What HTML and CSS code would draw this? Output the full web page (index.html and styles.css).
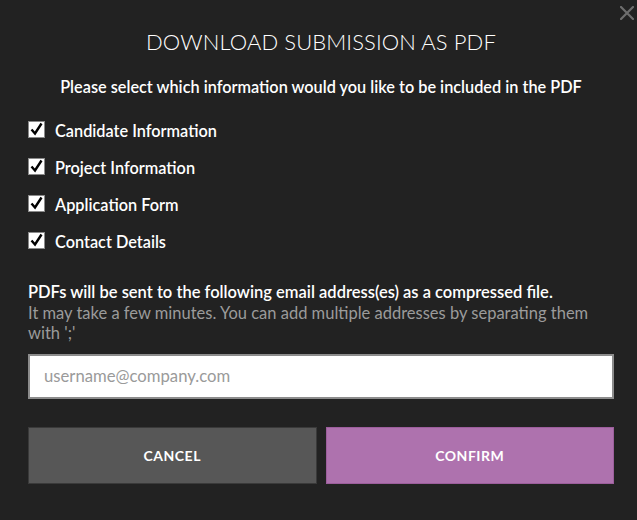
FILE: index.html
```html
<!DOCTYPE html>
<html>
<head>
<meta charset="utf-8">
<link rel="stylesheet" href="styles.css">
</head>
<body>
<div class="modal">
  <button class="close" aria-label="Close">
    <svg width="14" height="14" viewBox="0 0 14 14"><path d="M1 1 L13 13 M13 1 L1 13" stroke="#6e6e6e" stroke-width="2.2" stroke-linecap="square"/></svg>
  </button>
  <h1 class="title">DOWNLOAD SUBMISSION AS PDF</h1>
  <p class="subtitle">Please select which information would you like to be included in the PDF</p>
  <ul class="options">
    <li class="option"><span class="box"><svg width="15" height="15" viewBox="0 0 15 15"><path d="M2.5 7.5 L6 11.5 L12.5 1.5" fill="none" stroke="#000" stroke-width="2.4"/></svg></span>Candidate Information</li>
    <li class="option"><span class="box"><svg width="15" height="15" viewBox="0 0 15 15"><path d="M2.5 7.5 L6 11.5 L12.5 1.5" fill="none" stroke="#000" stroke-width="2.4"/></svg></span>Project Information</li>
    <li class="option"><span class="box"><svg width="15" height="15" viewBox="0 0 15 15"><path d="M2.5 7.5 L6 11.5 L12.5 1.5" fill="none" stroke="#000" stroke-width="2.4"/></svg></span>Application Form</li>
    <li class="option"><span class="box"><svg width="15" height="15" viewBox="0 0 15 15"><path d="M2.5 7.5 L6 11.5 L12.5 1.5" fill="none" stroke="#000" stroke-width="2.4"/></svg></span>Contact Details</li>
  </ul>
  <p class="info"><span class="info-strong">PDFs will be sent to the following email address(es) as a compressed file.</span><br><span class="info-muted">It may take a few minutes. You can add multiple addresses by separating them with ';'</span></p>
  <input class="email" type="text" placeholder="username@company.com">
  <div class="actions">
    <button class="btn btn-cancel">CANCEL</button>
    <button class="btn btn-confirm">CONFIRM</button>
  </div>
</div>
</body>
</html>
```

FILE: styles.css
```css
html, body {
  margin: 0;
  padding: 0;
  background: #222222;
}
body {
  width: 637px;
  height: 520px;
  overflow: hidden;
  font-family: "Lato", "Noto Sans", sans-serif;
}
.modal {
  position: relative;
  padding: 28px 23px 0 28px;
  box-sizing: border-box;
  width: 637px;
  height: 520px;
}
.close {
  position: absolute;
  top: 6px;
  right: 3px;
  background: none;
  border: 0;
  padding: 0;
  width: 14px;
  height: 14px;
  display: flex;
}
.title {
  margin: 0;
  text-align: center;
  font-weight: 300;
  font-size: 22px;
  line-height: 28px;
  color: #ffffff;
  letter-spacing: 0.1px;
}
.subtitle {
  margin: 21px 0 0;
  text-align: center;
  color: #ffffff;
  font-size: 16.3px;
  font-weight: 600;
  line-height: 20px;
}
.options {
  list-style: none;
  margin: 24px 0 0;
  padding: 0;
  display: flex;
  flex-direction: column;
  gap: 17px;
}
.option {
  display: flex;
  align-items: center;
  gap: 10px;
  color: #ffffff;
  font-size: 16.3px;
  font-weight: 600;
  line-height: 20px;
}
.box {
  width: 17px;
  height: 17px;
  box-sizing: border-box;
  background: #ffffff;
  border: 1px solid #8a8a8a;
  display: flex;
  align-items: center;
  justify-content: center;
  margin-top: -3px;
}
.info {
  margin: 30px 0 0;
  font-size: 16.5px;
  line-height: 20.5px;
}
.info-strong {
  color: #ffffff;
  font-weight: 600;
}
.info-muted {
  color: #9b9b9b;
}
.email {
  display: block;
  margin-top: 10px;
  width: 586px;
  height: 45px;
  box-sizing: border-box;
  border: 2px solid #8c8c8c;
  background: #ffffff;
  padding: 0 14px;
  font-family: inherit;
  font-size: 16.7px;
  color: #333;
  outline: none;
}
.email::placeholder {
  color: #9a9a9a;
}
.actions {
  display: flex;
  gap: 9px;
  margin-top: 28px;
  width: 586px;
}
.btn {
  flex: 1;
  height: 57px;
  border: 1px solid #3a3a3a;
  font-family: inherit;
  font-weight: 700;
  font-size: 14px;
  letter-spacing: 0.5px;
  color: #ffffff;
  cursor: pointer;
}
.btn-cancel {
  background: #575757;
}
.btn-confirm {
  background: #ae72ae;
  border-color: #9c5e9c;
}
```
